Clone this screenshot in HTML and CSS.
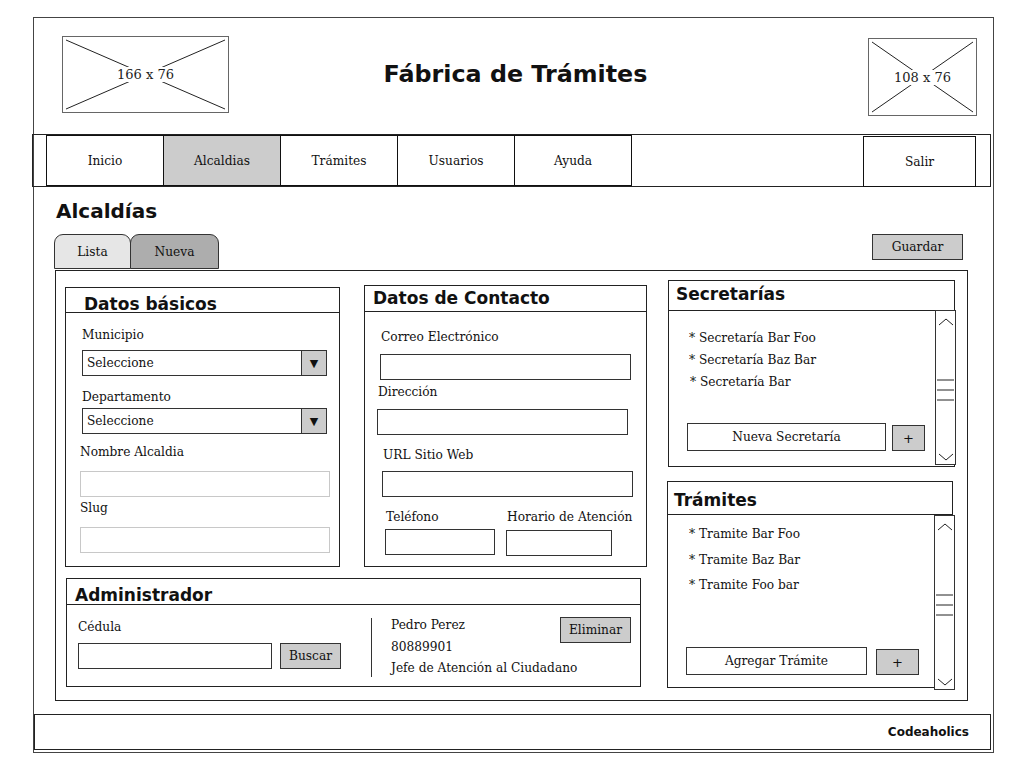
FILE: index.html
```html
<!DOCTYPE html>
<html lang="es">
<head>
    <meta charset="UTF-8">
    <title>Fábrica de Trámites</title>
    <link rel="stylesheet" href="styles.css">
</head>
<body>
    <div class="frame">
        <header class="top">
            <div class="ph ph-left">
                <svg viewBox="0 0 165 75" preserveAspectRatio="none"><line x1="3" y1="3" x2="162" y2="72"/><line x1="162" y1="3" x2="3" y2="72"/></svg>
                <span>166 x 76</span>
            </div>
            <h1 class="title">Fábrica de Trámites</h1>
            <div class="ph ph-right">
                <svg viewBox="0 0 107 76" preserveAspectRatio="none"><line x1="3" y1="3" x2="104" y2="73"/><line x1="104" y1="3" x2="3" y2="73"/></svg>
                <span>108 x 76</span>
            </div>
        </header>

        <nav class="nav">
            <a class="nav-item">Inicio</a>
            <a class="nav-item active">Alcaldias</a>
            <a class="nav-item">Trámites</a>
            <a class="nav-item">Usuarios</a>
            <a class="nav-item">Ayuda</a>
            <a class="nav-item nav-exit">Salir</a>
        </nav>

        <div class="content">
            <h2 class="page-title">Alcaldías</h2>
            <div class="tabs-row">
                <div class="tabs">
                    <span class="tab tab-list">Lista</span>
                    <span class="tab tab-new">Nueva</span>
                </div>
                <button class="btn btn-save">Guardar</button>
            </div>

            <div class="panel">
                <div class="col-left">
                    <div class="row-top">
                        <section class="box basic">
                            <h3 class="box-head">Datos básicos</h3>
                            <div class="basic-body">
                                <label class="lbl">Municipio</label>
                                <div class="select"><span>Seleccione</span><i>▼</i></div>
                                <label class="lbl">Departamento</label>
                                <div class="select"><span>Seleccione</span><i>▼</i></div>
                                <label class="lbl">Nombre Alcaldia</label>
                                <div class="input input-light"></div>
                                <label class="lbl">Slug</label>
                                <div class="input input-light"></div>
                            </div>
                        </section>

                        <section class="box contact">
                            <h3 class="box-head">Datos de Contacto</h3>
                            <div class="contact-body">
                                <label class="lbl">Correo Electrónico</label>
                                <div class="input"></div>
                                <label class="lbl">Dirección</label>
                                <div class="input"></div>
                                <label class="lbl">URL Sitio Web</label>
                                <div class="input"></div>
                                <div class="pair">
                                    <div class="pair-col">
                                        <label class="lbl">Teléfono</label>
                                        <div class="input input-tel"></div>
                                    </div>
                                    <div class="pair-col">
                                        <label class="lbl">Horario de Atención</label>
                                        <div class="input input-hours"></div>
                                    </div>
                                </div>
                            </div>
                        </section>
                    </div>

                    <section class="box admin">
                        <h3 class="box-head">Administrador</h3>
                        <div class="admin-body">
                            <div class="admin-search">
                                <label class="lbl">Cédula</label>
                                <div class="search-row">
                                    <div class="input input-id"></div>
                                    <button class="btn btn-find">Buscar</button>
                                </div>
                            </div>
                            <div class="divider"></div>
                            <div class="admin-info">
                                <div>Pedro Perez</div>
                                <div>80889901</div>
                                <div>Jefe de Atención al Ciudadano</div>
                            </div>
                            <button class="btn btn-delete">Eliminar</button>
                        </div>
                    </section>
                </div>

                <div class="col-right">
                    <section class="box secs">
                        <h3 class="box-head">Secretarías</h3>
                        <div class="list-body">
                            <div class="list-main">
                                <ul class="items">
                                    <li>* Secretaría Bar Foo</li>
                                    <li>* Secretaría Baz Bar</li>
                                    <li class="nudge">* Secretaría Bar</li>
                                </ul>
                                <div class="add-row">
                                    <div class="add-input">Nueva Secretaría</div>
                                    <button class="btn btn-plus">+</button>
                                </div>
                            </div>
                            <div class="scrollbar">
                                <svg width="16" height="9"><polyline points="1,8 8,2 15,8"/></svg>
                                <svg width="17" height="22"><line x1="0" y1="1" x2="17" y2="1"/><line x1="0" y1="11" x2="17" y2="11"/><line x1="0" y1="21" x2="17" y2="21"/></svg>
                                <svg width="16" height="9"><polyline points="1,1 8,7 15,1"/></svg>
                            </div>
                        </div>
                    </section>

                    <section class="box tramites">
                        <h3 class="box-head">Trámites</h3>
                        <div class="list-body">
                            <div class="list-main">
                                <ul class="items">
                                    <li>* Tramite Bar Foo</li>
                                    <li>* Tramite Baz Bar</li>
                                    <li>* Tramite Foo bar</li>
                                </ul>
                                <div class="add-row">
                                    <div class="add-input">Agregar Trámite</div>
                                    <button class="btn btn-plus">+</button>
                                </div>
                            </div>
                            <div class="scrollbar">
                                <svg width="16" height="9"><polyline points="1,8 8,2 15,8"/></svg>
                                <svg width="17" height="22"><line x1="0" y1="1" x2="17" y2="1"/><line x1="0" y1="11" x2="17" y2="11"/><line x1="0" y1="21" x2="17" y2="21"/></svg>
                                <svg width="16" height="9"><polyline points="1,1 8,7 15,1"/></svg>
                            </div>
                        </div>
                    </section>
                </div>
            </div>
        </div>

        <footer class="foot">Codeaholics</footer>
    </div>
</body>
</html>
```

FILE: styles.css
```css
/* wireframe: Fábrica de Trámites */
body {
    margin: 0;
    background: #fff;
    color: #111;
    font-family: "DejaVu Serif", "Liberation Serif", serif;
    font-size: 12.2px;
}
h1, h2, h3, ul {
    margin: 0;
    padding: 0;
}
.frame {
    margin: 17px 0 0 33px;
    width: 961px;
    box-sizing: border-box;
    border: 1px solid #444;
    padding-bottom: 2px;
}

/* header */
.top {
    height: 116px;
    box-sizing: border-box;
    padding: 18px 16px 0 28px;
    display: grid;
    grid-template-columns: 1fr auto 1fr;
    align-items: start;
}
.ph {
    position: relative;
    box-sizing: border-box;
    border: 1px solid #666;
    display: flex;
    align-items: center;
    justify-content: center;
}
.ph svg {
    position: absolute;
    left: 0;
    top: 0;
    width: 100%;
    height: 100%;
    stroke: #222;
    stroke-width: 1;
}
.ph span {
    position: relative;
    background: #fff;
    padding: 0 4px;
    color: #222;
    font-size: 13px;
}
.ph-left {
    width: 167px;
    height: 77px;
    justify-self: start;
}
.ph-right {
    width: 109px;
    height: 78px;
    justify-self: end;
    margin-top: 2px;
}
.title {
    font-family: "DejaVu Sans", sans-serif;
    font-weight: bold;
    font-size: 23.8px;
    line-height: 28px;
    margin: 24px 8px 0 0;
}

/* nav */
.nav {
    margin-left: -2px;
    width: 959px;
    height: 53px;
    box-sizing: border-box;
    border: 1px solid #222;
    padding-left: 13px;
    display: flex;
}
.nav-item {
    width: 118px;
    height: 51px;
    box-sizing: border-box;
    border: 1px solid #111;
    margin-right: -1px;
    display: flex;
    align-items: center;
    justify-content: center;
    color: #111;
}
.nav-item.active {
    background: #ccc;
}
.nav-exit {
    width: 113px;
    margin: 1px 14px 0 auto;
}

/* page */
.content {
    padding-left: 21px;
}
.page-title {
    font-family: "DejaVu Sans", sans-serif;
    font-weight: bold;
    font-size: 20px;
    line-height: 24px;
    margin: 12px 0 0 1px;
}
.tabs-row {
    width: 913px;
    margin-top: 11px;
    display: flex;
    justify-content: space-between;
    align-items: flex-start;
}
.tabs {
    display: flex;
    margin-left: -1px;
}
.tab {
    height: 35px;
    box-sizing: border-box;
    border: 1px solid #333;
    border-radius: 9px 9px 0 0;
    display: flex;
    align-items: center;
    justify-content: center;
}
.tab-list {
    width: 77px;
    background: #e6e6e6;
}
.tab-new {
    width: 89px;
    margin-left: -1px;
    background: #adadad;
}
.btn {
    font: inherit;
    color: #111;
    height: 26px;
    padding: 0;
    box-sizing: border-box;
    border: 1px solid #333;
    background: #ccc;
    flex-shrink: 0;
}
.btn-save {
    width: 91px;
    margin-right: 5px;
}

/* panel */
.panel {
    width: 913px;
    height: 431px;
    box-sizing: border-box;
    border: 1px solid #222;
    margin-top: 1px;
    padding: 9px 0 0 9px;
    display: flex;
}
.col-left {
    width: 582px;
}
.col-right {
    margin-left: 20px;
}
.row-top {
    display: flex;
    align-items: flex-start;
}
.box {
    box-sizing: border-box;
    border: 1px solid #222;
}
.box-head {
    box-sizing: border-box;
    border-bottom: 1px solid #222;
    font-family: "DejaVu Sans", sans-serif;
    font-weight: bold;
    font-size: 17px;
    line-height: 20px;
}
.lbl {
    display: block;
    line-height: 16px;
    white-space: nowrap;
}
.input {
    height: 26px;
    box-sizing: border-box;
    border: 1px solid #333;
    background: #fff;
}
.input-light {
    border-color: #c8c8c8;
}
.select {
    height: 26px;
    box-sizing: border-box;
    border: 1px solid #333;
    display: flex;
    align-items: center;
}
.select span {
    flex: 1;
    padding-left: 4px;
}
.select i {
    font-style: normal;
    font-family: "DejaVu Sans", sans-serif;
    font-size: 11px;
    width: 25px;
    height: 100%;
    box-sizing: border-box;
    border-left: 1px solid #333;
    background: #ccc;
    display: flex;
    align-items: center;
    justify-content: center;
}

/* datos basicos */
.basic {
    width: 275px;
    height: 280px;
    margin-top: 7px;
}
.basic .box-head {
    height: 25px;
    padding: 6px 0 0 18px;
}
.basic-body {
    padding-left: 14px;
}
.basic-body .select {
    width: 245px;
    margin-left: 2px;
}
.basic-body .input {
    width: 250px;
}
.basic-body > :nth-child(1) { margin: 14px 0 0 2px; }
.basic-body > :nth-child(2) { margin-top: 7px; }
.basic-body > :nth-child(3) { margin: 13px 0 0 2px; }
.basic-body > :nth-child(4) { margin-top: 3px; }
.basic-body > :nth-child(5) { margin-top: 10px; }
.basic-body > :nth-child(6) { margin-top: 11px; }
.basic-body > :nth-child(7) { margin-top: 3px; }
.basic-body > :nth-child(8) { margin-top: 11px; }

/* datos de contacto */
.contact {
    width: 283px;
    height: 282px;
    margin: 5px 0 0 24px;
}
.contact .box-head {
    height: 26px;
    padding: 2px 0 0 8px;
}
.contact-body {
    padding-left: 12px;
}
.contact-body > .input {
    width: 251px;
}
.contact-body > :nth-child(1) { margin: 17px 0 0 4px; }
.contact-body > :nth-child(2) { margin: 9px 0 0 3px; }
.contact-body > :nth-child(3) { margin: 4px 0 0 1px; }
.contact-body > :nth-child(4) { margin-top: 9px; }
.contact-body > :nth-child(5) { margin: 12px 0 0 6px; }
.contact-body > :nth-child(6) { margin: 8px 0 0 5px; }
.pair {
    display: flex;
    gap: 11px;
    margin: 12px 0 0 8px;
}
.pair .lbl {
    margin-left: 1px;
}
.pair .input {
    margin-top: 4px;
}
.input-tel {
    width: 110px;
}
.input-hours {
    width: 106px;
    position: relative;
    top: 1px;
}

/* administrador */
.admin {
    width: 575px;
    height: 109px;
    margin: 11px 0 0 1px;
}
.admin .box-head {
    height: 26px;
    padding: 6px 0 0 8px;
}
.admin-body {
    display: flex;
    align-items: flex-start;
}
.admin-search {
    flex-shrink: 0;
    padding: 14px 0 0 11px;
}
.search-row {
    display: flex;
    margin-top: 8px;
}
.input-id {
    width: 194px;
}
.btn-find {
    width: 61px;
    margin-left: 8px;
}
.divider {
    flex-shrink: 0;
    width: 1px;
    height: 59px;
    background: #333;
    margin: 13px 0 0 30px;
}
.admin-info {
    flex: 0 0 150px;
    min-width: 0;
    margin-left: 19px;
    padding-top: 10px;
    line-height: 21.5px;
    white-space: nowrap;
}
.btn-delete {
    width: 71px;
    margin: 12px 9px 0 auto;
}

/* secretarias / tramites */
.secs {
    width: 287px;
    height: 187px;
    margin-left: 1px;
    display: flex;
    flex-direction: column;
}
.secs .box-head {
    height: 30px;
    padding: 3px 0 0 7px;
}
.tramites {
    width: 286px;
    height: 207px;
    margin-top: 14px;
    display: flex;
    flex-direction: column;
}
.tramites .box-head {
    height: 33px;
    padding: 8px 0 0 6px;
}
.list-body {
    flex: 1;
    display: flex;
}
.list-main {
    flex: 1;
    display: flex;
    flex-direction: column;
}
.items {
    list-style: none;
}
.secs .list-main {
    padding: 16px 0 15px 20px;
}
.secs .items {
    line-height: 22px;
}
.items .nudge {
    padding-left: 1px;
}
.tramites .list-main {
    padding: 7px 0 12px 21px;
}
.tramites .items {
    line-height: 25.5px;
}
.add-row {
    margin-top: auto;
    display: flex;
    align-items: flex-end;
}
.add-input {
    height: 28px;
    box-sizing: border-box;
    border: 1px solid #333;
    display: flex;
    align-items: center;
    justify-content: center;
}
.secs .add-input {
    width: 199px;
    margin-left: -2px;
}
.tramites .add-input {
    width: 181px;
    margin-left: -3px;
}
.btn-plus {
    font-family: "DejaVu Sans", sans-serif;
    font-size: 13px;
}
.secs .btn-plus {
    width: 33px;
    margin-left: 6px;
}
.tramites .btn-plus {
    width: 43px;
    margin-left: 9px;
}
.scrollbar {
    width: 21px;
    box-sizing: border-box;
    border: 1px solid #333;
    background: #fff;
    padding: 6px 0 2px;
    display: flex;
    flex-direction: column;
    justify-content: space-between;
    align-items: center;
}
.scrollbar svg {
    stroke: #222;
    stroke-width: 1;
    fill: none;
}
.secs .scrollbar {
    margin: -1px -2px 1px 0;
}
.tramites .scrollbar {
    margin: 0 -3px -3px 0;
}

/* footer */
.foot {
    width: 957px;
    height: 36px;
    box-sizing: border-box;
    border: 1px solid #222;
    margin-top: 13px;
    padding-right: 21px;
    display: flex;
    align-items: center;
    justify-content: flex-end;
    font-family: "DejaVu Sans", sans-serif;
    font-weight: bold;
    font-size: 12px;
}
```
